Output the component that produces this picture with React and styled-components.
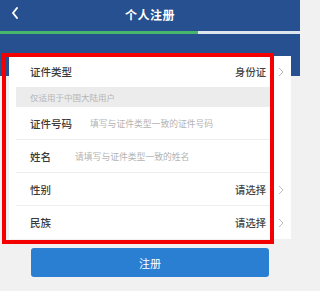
import React from 'react'
import styled, { createGlobalStyle } from 'styled-components'

const GlobalStyle = createGlobalStyle`
  html, body {
    margin: 0;
    padding: 0;
    background: #f1f1f1;
    font-family: "Noto Sans CJK SC", "Noto Sans", sans-serif;
  }
`

const Page = styled.div`
  position: relative;
  width: 300px;
  height: 291px;
  overflow: hidden;
  background: #f1f1f1;
`

const Header = styled.div`
  position: relative;
  height: 31px;
  background: #26508f;
  display: flex;
  align-items: center;
  justify-content: center;
`

const BackButton = styled.div`
  position: absolute;
  left: 10px;
  top: 6px;
  width: 10px;
  height: 14px;
  display: flex;
`

const Title = styled.div`
  color: #fff;
  font-size: 12px;
  font-weight: 700;
  letter-spacing: 0.5px;
  margin-top: -3px;
`

const Progress = styled.div`
  display: flex;
  height: 3px;
  background: #dde5ef;
`

const ProgressFill = styled.div`
  background: #47b56a;
  height: 100%;
`

const BlueBand = styled.div`
  height: 42px;
  background: #26508f;
`

const Card = styled.div`
  position: relative;
  margin: -20px 9px 0;
  background: #fff;
  padding-left: 7px;
`

const Row = styled.div`
  display: flex;
  align-items: stretch;
  height: ${p => p.h || 33}px;
`

const RowBody = styled.div`
  flex: 1;
  display: flex;
  align-items: center;
  padding: 0 4px 0 14px;
  border-bottom: ${p => (p.divider ? '1px solid #eeeeee' : 'none')};
  box-sizing: border-box;
`

const Label = styled.span`
  font-size: 10.5px;
  font-weight: 500;
  color: #3a3a3a;
  margin-right: ${p => p.gap || 0}px;
  white-space: nowrap;
`

const Placeholder = styled.span`
  font-size: 8.8px;
  color: #b3b3b3;
  white-space: nowrap;
`

const Value = styled.span`
  margin-left: auto;
  font-size: 10.3px;
  font-weight: 500;
  color: #444;
  white-space: nowrap;
`

const ArrowCell = styled.div`
  width: 21px;
  display: flex;
  align-items: center;
  justify-content: center;
`

const Notice = styled.div`
  height: 20px;
  margin-right: 21px;
  background: #ececec;
  display: flex;
  align-items: center;
  padding-left: 14px;
  font-size: 8.5px;
  color: #b5b5b5;
`

const SubmitButton = styled.button`
  display: block;
  margin: 9px auto 0;
  width: 238px;
  height: 29px;
  border: none;
  border-radius: 3px;
  background: #2b7fd3;
  color: #fff;
  font-family: inherit;
  font-size: 11px;
  padding: 0;
`

const Highlight = styled.div`
  position: absolute;
  left: 2px;
  top: 53px;
  width: 272px;
  height: 191px;
  border: 4px solid #f50000;
  box-sizing: border-box;
  pointer-events: none;
`

const Chevron = () => (
  <svg width="6" height="10" viewBox="0 0 6 10">
    <polyline points="1,1 5,5 1,9" fill="none" stroke="#bdbdbd" strokeWidth="1" />
  </svg>
)

const BackIcon = () => (
  <svg width="10" height="14" viewBox="0 0 10 14">
    <polyline points="7,2 3,7 7,12" fill="none" stroke="#fff" strokeWidth="2" strokeLinecap="round" strokeLinejoin="round" />
  </svg>
)

const rows = [
  { label: '证件号码', placeholder: '填写与证件类型一致的证件号码', gap: 18, divider: true },
  { label: '姓名', placeholder: '请填写与证件类型一致的姓名', gap: 24, divider: true },
  { label: '性别', value: '请选择', arrow: true, divider: true, h: 33 },
  { label: '民族', value: '请选择', arrow: true, h: 33 },
]

export default function App() {
  return (
    <Page>
      <GlobalStyle />
      <Header>
        <BackButton>
          <BackIcon />
        </BackButton>
        <Title>个人注册</Title>
      </Header>
      <Progress>
        <ProgressFill style={{ width: '66%' }} />
      </Progress>
      <BlueBand />
      <Card>
        <Row h={31}>
          <RowBody>
            <Label>证件类型</Label>
            <Value>身份证</Value>
          </RowBody>
          <ArrowCell>
            <Chevron />
          </ArrowCell>
        </Row>
        <Notice>仅适用于中国大陆用户</Notice>
        {rows.map(r => (
          <Row key={r.label} h={r.h}>
            <RowBody divider={r.divider}>
              <Label gap={r.gap}>{r.label}</Label>
              {r.placeholder && <Placeholder>{r.placeholder}</Placeholder>}
              {r.value && <Value>{r.value}</Value>}
            </RowBody>
            <ArrowCell>{r.arrow && <Chevron />}</ArrowCell>
          </Row>
        ))}
      </Card>
      <SubmitButton>注册</SubmitButton>
      <Highlight />
    </Page>
  )
}
